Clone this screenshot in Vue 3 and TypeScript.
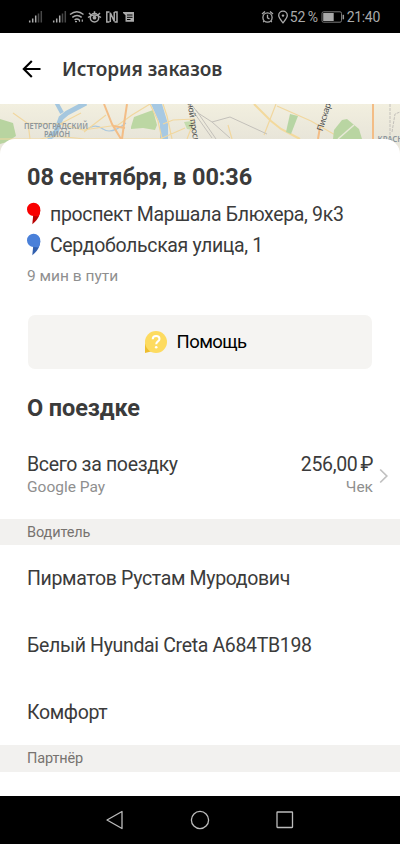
<script setup lang="ts">
interface Stop {
  label: string
  color: string
  tail: string
}

const stops: Stop[] = [
  { label: 'проспект Маршала Блюхера, 9к3', color: '#f90000', tail: '#b80000' },
  { label: 'Сердобольская улица, 1', color: '#4a80d9', tail: '#315fae' },
]

const driverRows: string[] = ['Пирматов Рустам Муродович', 'Белый Hyundai Creta A684TB198', 'Комфорт']
</script>

<template>
  <div class="screen">
    <div class="status">
      <svg class="status-left" width="110" height="34" viewBox="0 0 110 34" fill="none">
        <g v-for="x in [0, 24]" :key="x" :transform="`translate(${x} 0)`">
          <path d="M1.700 22.600v-2M4.700 22.600v-4M7.700 22.600v-7" stroke="#aaa" stroke-width="1.500" />
          <path d="M10.500 22.600v-9M13.300 22.600v-11.500" stroke="#484848" stroke-width="1.500" />
        </g>
        <g stroke="#aaa" stroke-width="1.500">
          <path d="M42 14.500q7-5.400 13.500 0M44.300 17.300q4.800-3.500 9.400 0M46.600 19.800q2.300-1.600 4.600 0" />
          <path d="M47 21.700h2M51.500 19.500v2.300M54.300 19.500v2.300" stroke-width="1.200" />
          <path d="M60 17.500q6.500-5 13 0" />
          <circle cx="66.500" cy="17.700" r="4.200" />
          <path d="M61 13l2 2M66.500 11.300v2.500M72 13l-2 2" />
          <path d="M81.500 12h-2.700v10h2.700M86.500 12H89v10h-2.500M82.300 22V12.700l3.900 8.600V12" />
        </g>
        <circle cx="66.500" cy="17.700" r="1.900" fill="#aaa" />
        <path d="M95 12h11v9.800h-8.500v-6.500L95 13z" fill="#aaa" />
        <path d="M99 15h5.500M99 17.300h5.500M99 19.500h3.500" stroke="#000" stroke-width="1" />
      </svg>
      <div class="status-right">
        <svg width="28" height="16" viewBox="0 0 28 16" fill="none" stroke="#aaa" stroke-width="1.300">
          <circle cx="6.500" cy="8.500" r="4.600" />
          <path d="M6.500 5.700v3.100l2 1.200M1 5l3-2.600M12 5L9 2.400M3.200 12l-1 1.200M9.800 12l1 1.200" />
          <path d="M22 13.800c-2.800-3.500-4.300-5.200-4.300-7.300a4.300 4.300 0 0 1 8.600 0c0 2.100-1.500 3.800-4.300 7.300z" />
          <circle cx="22" cy="6.600" r="1.200" fill="#aaa" stroke="none" />
        </svg>
        <span class="percent">52 %</span>
        <svg class="battery" width="24" height="12" viewBox="0 0 24 12" fill="none">
          <rect x="1" y=".800" width="19.500" height="10.400" rx="1.500" stroke="#777" />
          <rect x="2.200" y="2" width="10.500" height="8" fill="#aaa" />
          <path d="M22.300 3.800v4.500" stroke="#999" stroke-width="1.500" />
        </svg>
        <span class="time">21:40</span>
      </div>
    </div>

    <header class="header">
      <svg width="20" height="20" viewBox="0 0 20 20" fill="none" stroke="#000" stroke-width="2.100">
        <path d="M18.500 10H2M9.800 2L1.800 10l8 8" />
      </svg>
      <h1>История заказов</h1>
    </header>

    <div class="map">
      <svg width="400" height="54" viewBox="0 0 400 54" fill="none">
        <defs>
          <linearGradient id="land" x1="0" y1="0" x2="0" y2="1">
            <stop offset="0" stop-color="#f2efdf" />
            <stop offset="0.650" stop-color="#e8e5d9" />
            <stop offset="1" stop-color="#eeece4" />
          </linearGradient>
        </defs>
        <rect width="400" height="54" fill="url(#land)" />
        <path d="M0 15l13 4 3 13-9 6-7 2z" fill="#b8d4a0" />
        <path d="M131 23l3-10 19-7 4 15-2 5-12-2-12 1z" fill="#bcd7a3" />
        <path d="M184 18l8-1 1 9-6-1z" fill="#c4dcae" />
        <path d="M86-1L67 9l-6 5-5 14-8 7" stroke="#a5c7df" stroke-width="5" />
        <path d="M56-2l6 11" stroke="#a5c7df" stroke-width="4" />
        <path d="M86 26q9-7 17-1t23-6" stroke="#abc8de" stroke-width="1.200" />
        <path d="M151 0h11l6 20v15h-8V20z" fill="#a7c9e3" />
        <g stroke="#f1d79f" stroke-width="1.200">
          <path d="M0 35h40l16-3 29 3h75l25-11M13 9l14 10 33 1 21-11M28 19l2 16M60 20l23 6 35-5 14-10 18-11M84 28l22-17M150 0l8 17 4 18M163 0l4 12 5 23M194 17l-7 18M228 21l4 14M276 0l-12 31M277 2l34 15 26 15M163 20l10-4 22-1" />
        </g>
        <g stroke="#f3bd86" stroke-width="2">
          <path d="M104 0l8 20 9 15M127 0l-3 20-2 15M113 22l12 2M320 23l-2 12M373 0v35" />
          <path d="M254 0l17 17 10 8 19 10" stroke="#f3d99c" />
        </g>
        <g stroke="#c3c0ba" stroke-width="1">
          <path d="M191 0l7 9 14 9 18-5 37 17M196 6l20 29M188 0l24 34M212 18l18 16" />
          <path d="M390 0v35M392 28l3-18 5-2" stroke-dasharray="3 1" />
        </g>
        <path d="M290 10l8 2-7 18-5-2z" fill="#b7d5a4" />
        <path d="M334 26l8-10 5-1 12 10 3 10h-29z" fill="#b9d5a2" />
        <path d="M338 35l16-14" stroke="#e9e9d8" stroke-width="1.500" />
        <g class="labels">
          <text x="24" y="25" textLength="64" lengthAdjust="spacingAndGlyphs">ПЕТРОГРАДСКИЙ</text>
          <text x="44" y="33" textLength="26" lengthAdjust="spacingAndGlyphs">РАЙОН</text>
          <text x="377.500" y="37.500" textLength="36" lengthAdjust="spacingAndGlyphs">КРАСНОГ</text>
          <text class="street" transform="translate(186 -10) rotate(81)">льной проспект</text>
          <text class="street" transform="translate(322.500 27.500) rotate(-73)">Пискарёвский</text>
        </g>
      </svg>
    </div>

    <main class="sheet">
      <h2 class="date">08 сентября, в 00:36</h2>
      <div v-for="stop in stops" :key="stop.label" class="stop">
        <svg width="14" height="23" viewBox="0 0 14 23">
          <path d="M13.300 8C13 14 10 18.500 5.300 22.300L6.300 12z" :fill="stop.tail" />
          <path d="M6.700.700a6.600 6.600 0 0 1 6.600 6.600c0 3-.800 5.300-1.800 7.200l-5-.600A6.600 6.600 0 0 1 6.700.700z" :fill="stop.color" />
        </svg>
        <span>{{ stop.label }}</span>
      </div>
      <p class="duration">9 мин в пути</p>

      <button class="help" type="button">
        <svg width="24" height="24" viewBox="0 0 24 24" fill="none">
          <path d="M1 13v10l8-2z" fill="#edbd2e" />
          <circle cx="12" cy="12" r="11" fill="#fddb60" />
          <path d="M8.700 9.300c0-4.700 6.800-4.300 6.800-.400 0 2.500-3.300 2.500-3.300 5.300" stroke="#fff" stroke-width="2" />
          <circle cx="12.200" cy="17.200" r="1.300" fill="#fff" />
        </svg>
        <span>Помощь</span>
      </button>

      <h2 class="about">О поездке</h2>
      <section class="payment">
        <div class="pay-left">
          <span class="main">Всего за поездку</span>
          <span class="sub">Google Pay</span>
        </div>
        <div class="pay-right">
          <span class="main">256,00<span class="ruble">₽</span></span>
          <span class="sub">Чек</span>
        </div>
        <svg class="chevron" width="10" height="16" viewBox="0 0 10 16" fill="none" stroke="#c0c0c0" stroke-width="1.700">
          <path d="M1.200 1.500L7.800 8l-6.600 6.500" />
        </svg>
      </section>

      <h3 class="band">Водитель</h3>
      <div v-for="row in driverRows" :key="row" class="row">{{ row }}</div>
      <h3 class="band partner">Партнёр</h3>
    </main>

    <nav class="nav">
      <svg width="190" height="20" viewBox="0 0 190 20" fill="none" stroke="#bcbcbc" stroke-width="1.300">
        <path d="M16 1.500v17L1 10z" stroke-linejoin="round" />
        <circle cx="94" cy="10" r="8.600" />
        <rect x="171" y="2" width="15.500" height="15.500" rx=".5" />
      </svg>
    </nav>
  </div>
</template>

<style>
body {
  margin: 0;
}
</style>

<style scoped>
.screen {
  display: flex;
  flex-direction: column;
  width: 400px;
  height: 844px;
  overflow: hidden;
  background: #fff;
  color: #3b3b3b;
  font-family: Roboto, 'Liberation Sans', sans-serif;
}
h1, h2, h3, p {
  margin: 0;
}
svg {
  display: block;
  flex: none;
}
.status {
  display: flex;
  justify-content: space-between;
  height: 33px;
  flex: none;
  padding: 0 20px 0 28px;
  background: #000;
}
.status-right {
  display: flex;
  align-items: center;
  height: 34px;
  color: #aaa;
  font-size: 14px;
  white-space: nowrap;
}
.percent {
  margin-left: 1px;
  letter-spacing: -0.3px;
  word-spacing: -0.5px;
}
.battery {
  margin: 0 2px 0 3px;
}
.time {
  letter-spacing: -0.3px;
}
.header {
  display: flex;
  align-items: center;
  flex: none;
  gap: 20px;
  height: 71px;
  padding-left: 22px;
}
h1 {
  font: 600 19px/28px 'Noto Sans', sans-serif;
  white-space: nowrap;
}
.map {
  height: 54px;
  flex: none;
  overflow: hidden;
}
.labels {
  fill: #8d969c;
  font: 600 8px 'Noto Sans', sans-serif;
}
.street {
  fill: #4c4c4c;
  font-size: 8.6px;
  font-weight: 400;
  letter-spacing: -0.3px;
}
.sheet {
  position: relative;
  display: flex;
  flex-direction: column;
  flex: 1;
  margin-top: -19px;
  padding-top: 23px;
  border-radius: 15px 15px 0 0;
  background: #fff;
  white-space: nowrap;
}
h2 {
  height: 30px;
  padding-left: 27px;
  font-size: 23.5px;
  font-weight: 700;
  line-height: 30px;
  letter-spacing: -0.1px;
}
.date {
  margin-bottom: 6px;
}
.stop {
  display: flex;
  align-items: center;
  gap: 9px;
  height: 31px;
  padding-left: 27px;
  font-size: 19.5px;
  letter-spacing: -0.34px;
}
.stop span {
  padding-top: 1px;
}
.duration {
  margin-top: 5px;
  padding-left: 27px;
  color: #8f8f8f;
  font-size: 15.5px;
  line-height: 22px;
}
.help {
  display: flex;
  align-items: center;
  justify-content: center;
  gap: 9px;
  height: 54px;
  margin: 28px 28px 0;
  padding: 0 10px 0 0;
  border: 0;
  border-radius: 7px;
  background: #f5f4f2;
  color: #000;
  font: 400 18.5px/24px Roboto, sans-serif;
  letter-spacing: -0.6px;
}
.about {
  margin-top: 24px;
}
.payment {
  display: flex;
  align-items: center;
  height: 45px;
  margin: 29px 11px 22px 27px;
}
.pay-left, .pay-right {
  display: flex;
  flex-direction: column;
}
.pay-right {
  align-items: flex-end;
  margin-left: auto;
  margin-right: 6px;
}
.main {
  font-size: 19.5px;
  line-height: 25px;
  letter-spacing: -0.34px;
}
.sub {
  color: #8f8f8f;
  font-size: 15.5px;
  line-height: 20px;
}
.ruble {
  margin-left: 3px;
}
.chevron {
  margin-top: 3px;
}
.band {
  flex: none;
  box-sizing: border-box;
  height: 26px;
  padding: 1px 0 0 27px;
  background: #f2f1ef;
  color: #77736f;
  font-size: 14.5px;
  font-weight: 400;
  line-height: 26px;
  letter-spacing: -0.12px;
}
.partner {
  height: 27px;
}
.row {
  display: flex;
  align-items: center;
  box-sizing: border-box;
  height: 66.67px;
  flex: none;
  padding: 1px 0 0 27px;
  font-size: 19.5px;
  letter-spacing: -0.34px;
}
.nav {
  display: flex;
  align-items: center;
  height: 48px;
  flex: none;
  padding-left: 106px;
  background: #000;
}
</style>
